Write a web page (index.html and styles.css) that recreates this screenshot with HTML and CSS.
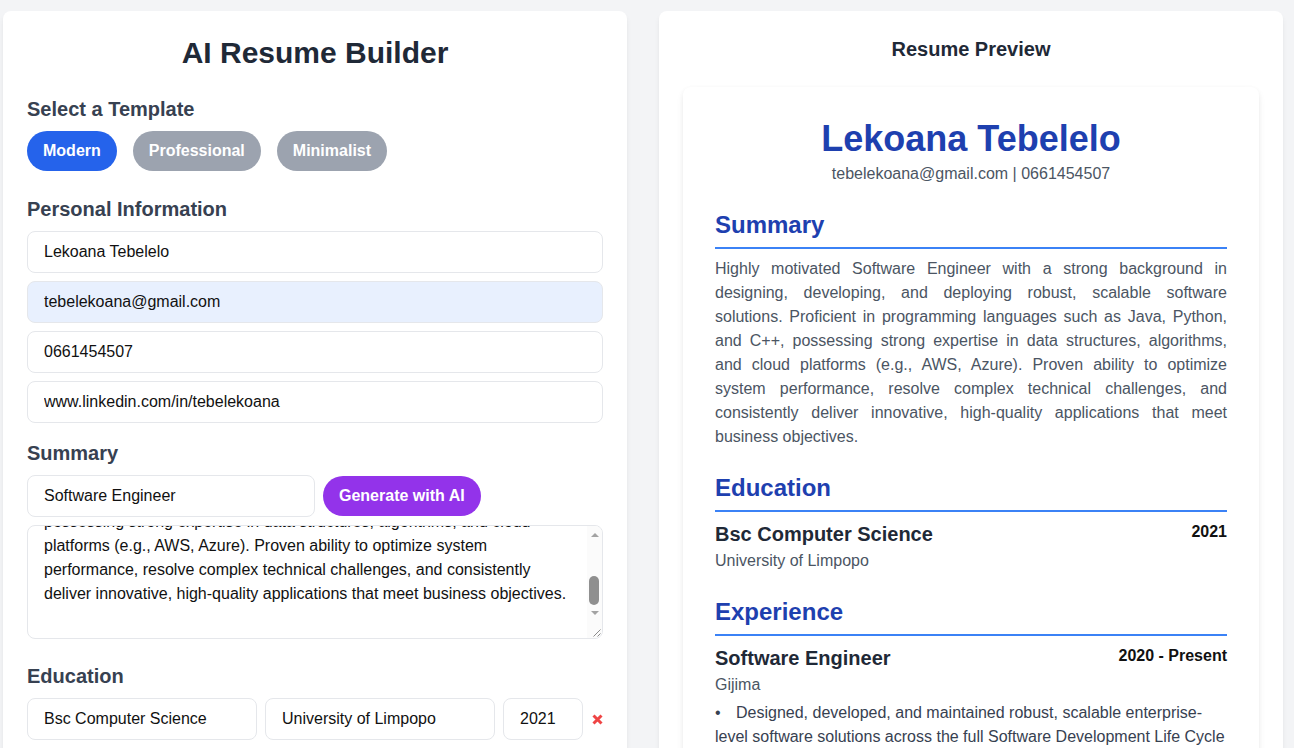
FILE: index.html
```html
<!DOCTYPE html>
<html lang="en">
<head>
<meta charset="utf-8">
<title>AI Resume Builder</title>
<link rel="stylesheet" href="styles.css">
</head>
<body>
<div class="app">
  <section class="panel editor">
    <h1 class="title">AI Resume Builder</h1>

    <h2 class="label">Select a Template</h2>
    <div class="templates">
      <button class="pill active">Modern</button>
      <button class="pill">Professional</button>
      <button class="pill">Minimalist</button>
    </div>

    <h2 class="label sec">Personal Information</h2>
    <div class="stack">
      <input class="field" type="text" value="Lekoana Tebelelo">
      <input class="field autofill" type="text" value="tebelekoana@gmail.com">
      <input class="field" type="text" value="0661454507">
      <input class="field" type="text" value="www.linkedin.com/in/tebelekoana">
    </div>

    <h2 class="label sec-sm">Summary</h2>
    <div class="summary-row">
      <input class="field half" type="text" value="Software Engineer">
      <button class="ai-btn">Generate with AI</button>
    </div>
    <div class="area-wrap">
      <textarea class="area" id="summary">Highly motivated Software Engineer with a strong background in designing, developing, and deploying robust, scalable software solutions. Proficient in programming languages such as Java, Python, and C++, possessing strong expertise in data structures, algorithms, and cloud platforms (e.g., AWS, Azure). Proven ability to optimize system performance, resolve complex technical challenges, and consistently deliver innovative, high-quality applications that meet business objectives.
</textarea>
      <div class="sb" aria-hidden="true">
        <div class="sb-btn"><span class="arrow up"></span></div>
        <div class="sb-track"><div class="sb-thumb"></div></div>
        <div class="sb-btn down"><span class="arrow dn"></span></div>
        <div class="sb-corner">
          <svg width="15" height="15" viewBox="0 0 15 15"><path d="M13.5 6.5 L6.5 13.5 M13.5 10.5 L10.5 13.5" stroke="#8a8a8a" stroke-width="1" fill="none"/></svg>
        </div>
      </div>
    </div>

    <h2 class="label sec-edu">Education</h2>
    <div class="edu-row">
      <input class="field grow" type="text" value="Bsc Computer Science">
      <input class="field grow" type="text" value="University of Limpopo">
      <input class="field year" type="text" value="2021">
      <button class="remove" aria-label="Remove">
        <svg width="11" height="11" viewBox="0 0 11 11"><path d="M1.5 1.5 L9.5 9.5 M9.5 1.5 L1.5 9.5" stroke="#ef4444" stroke-width="3" stroke-linecap="butt"/></svg>
      </button>
    </div>
  </section>

  <section class="panel preview">
    <h2 class="preview-title">Resume Preview</h2>
    <article class="resume">
      <h1 class="name">Lekoana Tebelelo</h1>
      <p class="contact">tebelekoana@gmail.com | 0661454507</p>

      <h3 class="r-head">Summary</h3>
      <p class="r-text">Highly motivated Software Engineer with a strong background in designing, developing, and deploying robust, scalable software solutions. Proficient in programming languages such as Java, Python, and C++, possessing strong expertise in data structures, algorithms, and cloud platforms (e.g., AWS, Azure). Proven ability to optimize system performance, resolve complex technical challenges, and consistently deliver innovative, high-quality applications that meet business objectives.</p>

      <h3 class="r-head">Education</h3>
      <div class="entry">
        <div class="entry-top">
          <span class="entry-title">Bsc Computer Science</span>
          <span class="entry-date">2021</span>
        </div>
        <div class="entry-sub">University of Limpopo</div>
      </div>

      <h3 class="r-head">Experience</h3>
      <div class="entry">
        <div class="entry-top">
          <span class="entry-title">Software Engineer</span>
          <span class="entry-date">2020 - Present</span>
        </div>
        <div class="entry-sub">Gijima</div>
        <ul class="bullets">
          <li>Designed, developed, and maintained robust, scalable enterprise-level software solutions across the full Software Development Life Cycle (SDLC).</li>
        </ul>
      </div>
    </article>
  </section>
</div>
<script src="script.js"></script>
</body>
</html>
```

FILE: styles.css
```css
* { box-sizing: border-box; }

html, body {
  margin: 0;
  background: #f3f4f6;
  font-family: "Liberation Sans", Arial, sans-serif;
  color: #1f2937;
  overflow: hidden;
}

.app {
  display: grid;
  grid-template-columns: 624px 624px;
  column-gap: 32px;
  padding: 11px 0 0 3px;
  align-items: start;
}

.panel {
  background: #ffffff;
  border-radius: 8px;
  box-shadow: 0 4px 6px -1px rgba(0,0,0,0.08), 0 2px 4px -2px rgba(0,0,0,0.06);
  padding: 24px;
  min-height: 900px;
}

.title {
  margin: 0 0 24px;
  font-size: 30px;
  line-height: 36px;
  font-weight: 700;
  text-align: center;
  color: #1f2937;
}

.label {
  margin: 0 0 8px;
  font-size: 20px;
  line-height: 28px;
  font-weight: 700;
  color: #374151;
}
.label.sec { margin-top: 24px; }
.label.sec-sm { margin-top: 16px; }
.label.sec-edu { margin-top: 23px; }

.templates {
  display: flex;
  gap: 16px;
}

.pill {
  height: 40px;
  padding: 0 16px;
  border: none;
  border-radius: 9999px;
  background: #9ca3af;
  color: #ffffff;
  font-family: inherit;
  font-size: 16px;
  font-weight: 700;
}
.pill.active { background: #2563eb; }

.stack {
  display: flex;
  flex-direction: column;
  gap: 8px;
}

.field {
  display: block;
  height: 42px;
  padding: 0 16px;
  border: 1px solid #e5e7eb;
  border-radius: 8px;
  background: #ffffff;
  font-family: inherit;
  font-size: 16px;
  color: #111111;
  width: 100%;
}
.field.autofill { background: #e8f0fe; }

.summary-row {
  display: flex;
  align-items: center;
  gap: 8px;
  margin-bottom: 8px;
}
.field.half { width: 288px; flex: none; }

.ai-btn {
  height: 40px;
  padding: 0 16px;
  border: none;
  border-radius: 9999px;
  background: #9333ea;
  color: #ffffff;
  font-family: inherit;
  font-size: 16px;
  font-weight: 700;
}

.area-wrap {
  position: relative;
}

.area {
  display: block;
  width: 100%;
  height: 114px;
  padding: 12px 31px 12px 16px;
  border: 1px solid #e5e7eb;
  border-radius: 8px;
  font-family: inherit;
  font-size: 16px;
  line-height: 24px;
  color: #111111;
  resize: none;
  overflow: hidden;
}

/* drawn vertical scrollbar sitting over the textarea's right edge */
.sb {
  position: absolute;
  top: 1px;
  right: 1px;
  bottom: 1px;
  width: 15px;
  display: flex;
  flex-direction: column;
  background: #fbfbfb;
  border-radius: 0 7px 7px 0;
  overflow: hidden;
}
.sb-btn {
  height: 15px;
  flex: none;
  display: flex;
  justify-content: center;
  align-items: flex-start;
  padding-top: 7px;
}
.sb-btn.down { padding-top: 3px; }
.arrow {
  width: 0;
  height: 0;
  border-left: 4px solid transparent;
  border-right: 4px solid transparent;
}
.arrow.up { border-bottom: 4px solid #a3a3a3; }
.arrow.dn { border-top: 4px solid #a3a3a3; }
.sb-track {
  flex: 1;
  padding: 35px 3px 0 2px;
}
.sb-thumb {
  height: 29px;
  background: #8f8f8f;
  border-radius: 5px;
}
.sb-corner {
  height: 15px;
  flex: none;
  display: flex;
}

.edu-row {
  display: flex;
  align-items: center;
  gap: 8px;
}
.field.grow { flex: 1 1 0; width: auto; min-width: 0; }
.field.year { flex: none; width: 80px; }

.remove {
  flex: none;
  width: 12px;
  height: 12px;
  padding: 0;
  border: none;
  background: none;
  display: flex;
  align-items: center;
  justify-content: center;
}

/* preview */
.preview-title {
  margin: 0 0 24px;
  font-size: 20px;
  line-height: 28px;
  font-weight: 700;
  text-align: center;
  color: #1f2937;
}

.resume {
  background: #ffffff;
  border-radius: 8px;
  box-shadow: 0 4px 8px -1px rgba(0,0,0,0.08), 0 1px 4px rgba(0,0,0,0.04);
  padding: 32px;
  min-height: 800px;
}

.name {
  margin: 0 0 3px;
  font-size: 36px;
  line-height: 40px;
  font-weight: 700;
  color: #1e40af;
  text-align: center;
}

.contact {
  margin: 0;
  font-size: 16px;
  line-height: 24px;
  color: #4b5563;
  text-align: center;
}

.r-head {
  margin: 23px 0 8px;
  padding-bottom: 6px;
  border-bottom: 2px solid #3b82f6;
  font-size: 24px;
  line-height: 32px;
  font-weight: 700;
  color: #1e40af;
}

.r-text {
  margin: 0;
  font-size: 16px;
  line-height: 24px;
  color: #4b5563;
  text-align: justify;
}

.entry-top {
  display: flex;
  justify-content: space-between;
  align-items: flex-start;
}
.entry-title {
  font-size: 20px;
  line-height: 28px;
  font-weight: 700;
  color: #1f2937;
}
.entry-date {
  font-size: 16px;
  line-height: 24px;
  font-weight: 700;
  color: #111111;
}
.entry-sub {
  margin-top: 1px;
  font-size: 16px;
  line-height: 24px;
  color: #4b5563;
}

.bullets {
  list-style: none;
  margin: 4px 0 0;
  padding: 0;
  font-size: 16px;
  line-height: 24px;
  color: #374151;
}
.bullets li::before {
  content: "•";
  display: inline-block;
  width: 21px;
}
```

FILE: script.js
```js
var ta = document.getElementById('summary');
ta.scrollTop = ta.scrollHeight - 116;
```
